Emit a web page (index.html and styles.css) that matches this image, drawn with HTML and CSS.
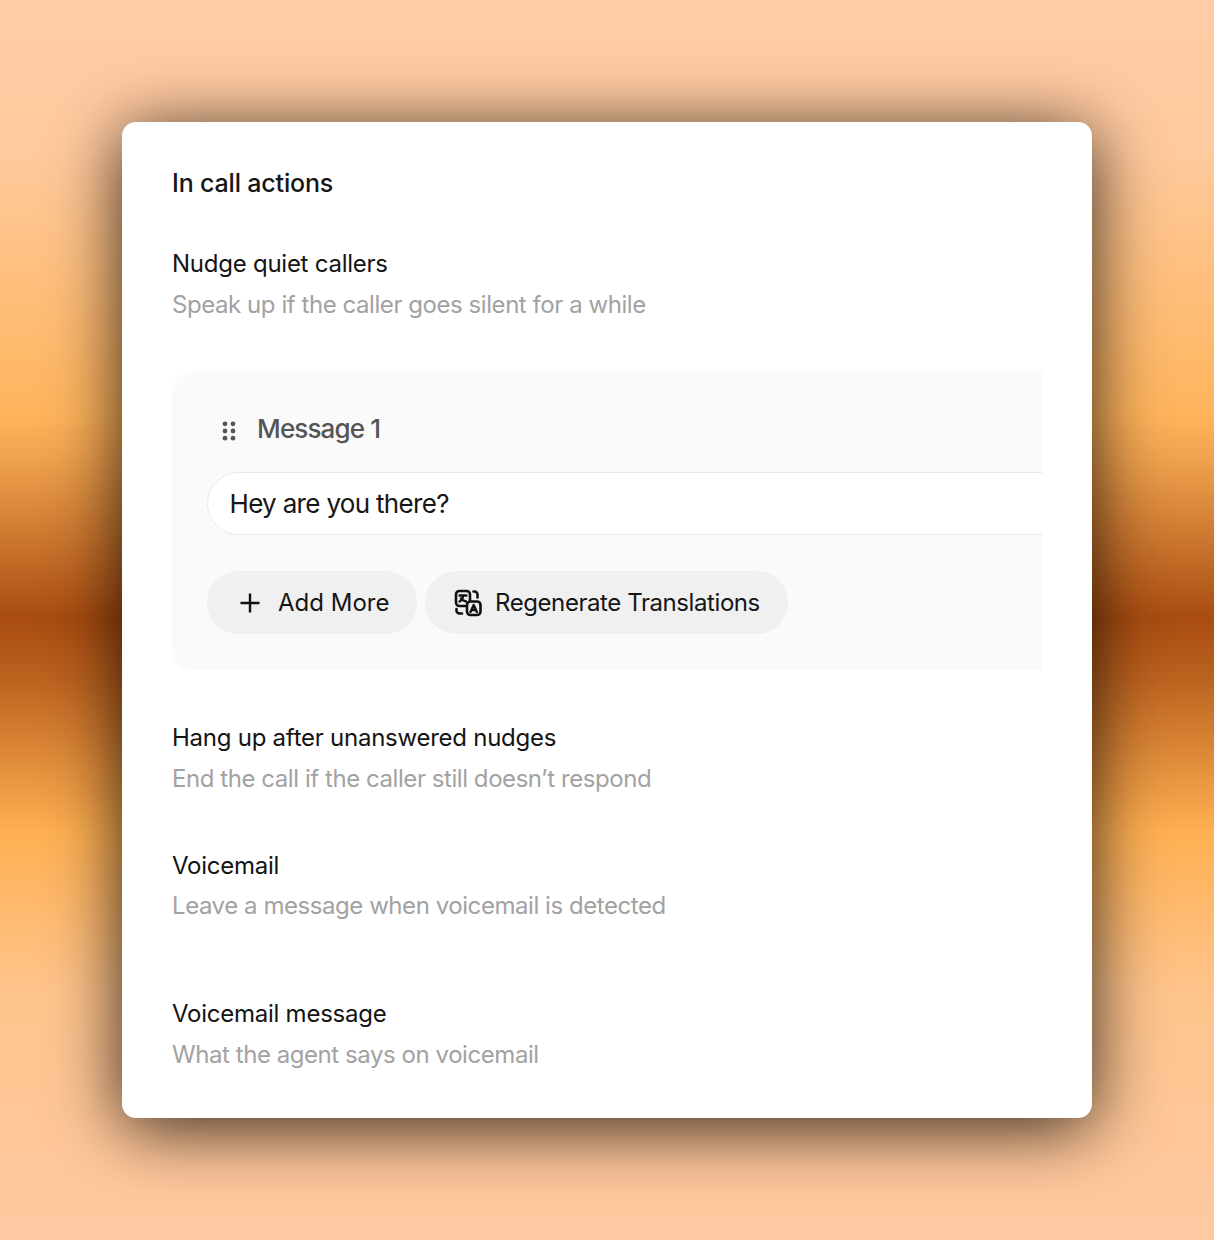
FILE: index.html
```html
<!DOCTYPE html>
<html lang="en">
<head>
<meta charset="utf-8">
<title>In call actions</title>
<link rel="stylesheet" href="styles.css">
</head>
<body>
<main class="card">
  <h1 class="title">In call actions</h1>
  <section class="setting first">
    <div class="label">Nudge quiet callers</div>
    <div class="hint">Speak up if the caller goes silent for a while</div>
  </section>
  <section class="panel">
    <div class="msg-head">
      <svg class="grip" width="14" height="20" viewBox="0 0 14 20" fill="#555"><circle cx="3" cy="2.800" r="2.400"/><circle cx="11" cy="2.800" r="2.400"/><circle cx="3" cy="10" r="2.400"/><circle cx="11" cy="10" r="2.400"/><circle cx="3" cy="17.200" r="2.400"/><circle cx="11" cy="17.200" r="2.400"/></svg>
      <span class="msg-title">Message 1</span>
    </div>
    <div class="input">Hey are you there?</div>
    <div class="actions">
      <button class="btn add">
        <svg width="22" height="22" viewBox="0 0 22 22" fill="none" stroke="#111" stroke-width="2.400"><path d="M11 1.500v19M1.500 11h19"/></svg>
        <span>Add More</span>
      </button>
      <button class="btn regen">
        <svg width="28" height="28" viewBox="0 0 28 28" fill="none" stroke="#111" stroke-width="2.600" stroke-linecap="round" stroke-linejoin="round"><rect x="2" y="2" width="14" height="15" rx="3.500"/><path d="M5.500 6.500h7M9 6.500c0 3-1.500 5-3.500 6M7 9.500c1 1.500 3 2.500 5 3" stroke-width="2.400"/><rect x="13" y="12.500" width="13.500" height="13.500" rx="3.500" fill="#f0f0f0"/><path d="M16.500 23l3.200-7 3.200 7M17.500 21h4.400" stroke-width="2.400"/><path d="M19.500 2.500h1a3 3 0 0 1 3 3v3"/><path d="M2.500 20v1.500a3 3 0 0 0 3 3H8"/></svg>
        <span>Regenerate Translations</span>
      </button>
    </div>
  </section>
  <section class="setting hang">
    <div class="label">Hang up after unanswered nudges</div>
    <div class="hint">End the call if the caller still doesn’t respond</div>
  </section>
  <section class="setting voicemail">
    <div class="label">Voicemail</div>
    <div class="hint">Leave a message when voicemail is detected</div>
  </section>
  <section class="setting vm-message">
    <div class="label">Voicemail message</div>
    <div class="hint">What the agent says on voicemail</div>
  </section>
</main>
</body>
</html>
```
FILE: styles.css
```css
* { box-sizing: border-box; }
html, body { height: 100%; }
body {
  margin: 0;
  height: 1240px;
  padding: 122px;
  overflow: hidden;
  font-family: "Inter", "Liberation Sans", sans-serif;
  background: linear-gradient(180deg, #ffcca6 0, #ffca9e 12%, #ffb45c 33.500%, #f0a24e 37%, #a84c10 49.900%, #bd6420 55%, #ffb052 67%, #ffc48c 80%, #ffc9a2 100%);
}
.card {
  width: 970px;
  height: 996px;
  padding: 42px 50px 0;
  background: #fff;
  border-radius: 14px;
  box-shadow: 0 10px 70px rgba(0, 0, 0, .8);
}
.title { margin: 0; font-size: 25px; line-height: 38px; font-weight: 500; color: #161616; letter-spacing: -.17px; }
.setting { display: flex; flex-direction: column; gap: 12px; }
.first { margin-top: 47px; }
.label { font-size: 24px; line-height: 29px; color: #141414; letter-spacing: -.25px; }
.hint { font-size: 24px; line-height: 29px; color: #a2a2a2; letter-spacing: -.44px; }
.panel {
  margin-top: 53px;
  height: 298px;
  padding: 35px 0 0 35px;
  background: #fafafa;
  border-radius: 20px 0 0 20px;
  overflow: hidden;
}
.msg-head { display: flex; align-items: center; gap: 21px; height: 43px; padding-left: 15px; }
.grip { flex: none; margin-top: 5px; }
.msg-title { font-size: 26px; font-weight: 500; color: #555; letter-spacing: -.85px; }
.input {
  margin-top: 22px;
  width: 900px;
  height: 63px;
  padding-left: 21.500px;
  display: flex;
  align-items: center;
  font-size: 26px;
  letter-spacing: -.68px;
  color: #161616;
  background: #fff;
  border: 1px solid #e8e8e8;
  border-radius: 32px;
}
.actions { display: flex; gap: 8px; margin-top: 36px; }
.btn {
  display: flex;
  align-items: center;
  height: 63px;
  border: 0;
  border-radius: 32px;
  background: #f0f0f0;
  font: inherit;
  font-size: 24px;
  color: #161616;
}
.add { width: 210px; padding: 0 0 0 32px; gap: 17px; }
.regen { width: 363px; padding: 0 0 0 29px; gap: 13px; letter-spacing: -.42px; }
.hang { margin-top: 53px; }
.voicemail { margin-top: 58px; gap: 11px; }
.vm-message { margin-top: 79px; }
```
